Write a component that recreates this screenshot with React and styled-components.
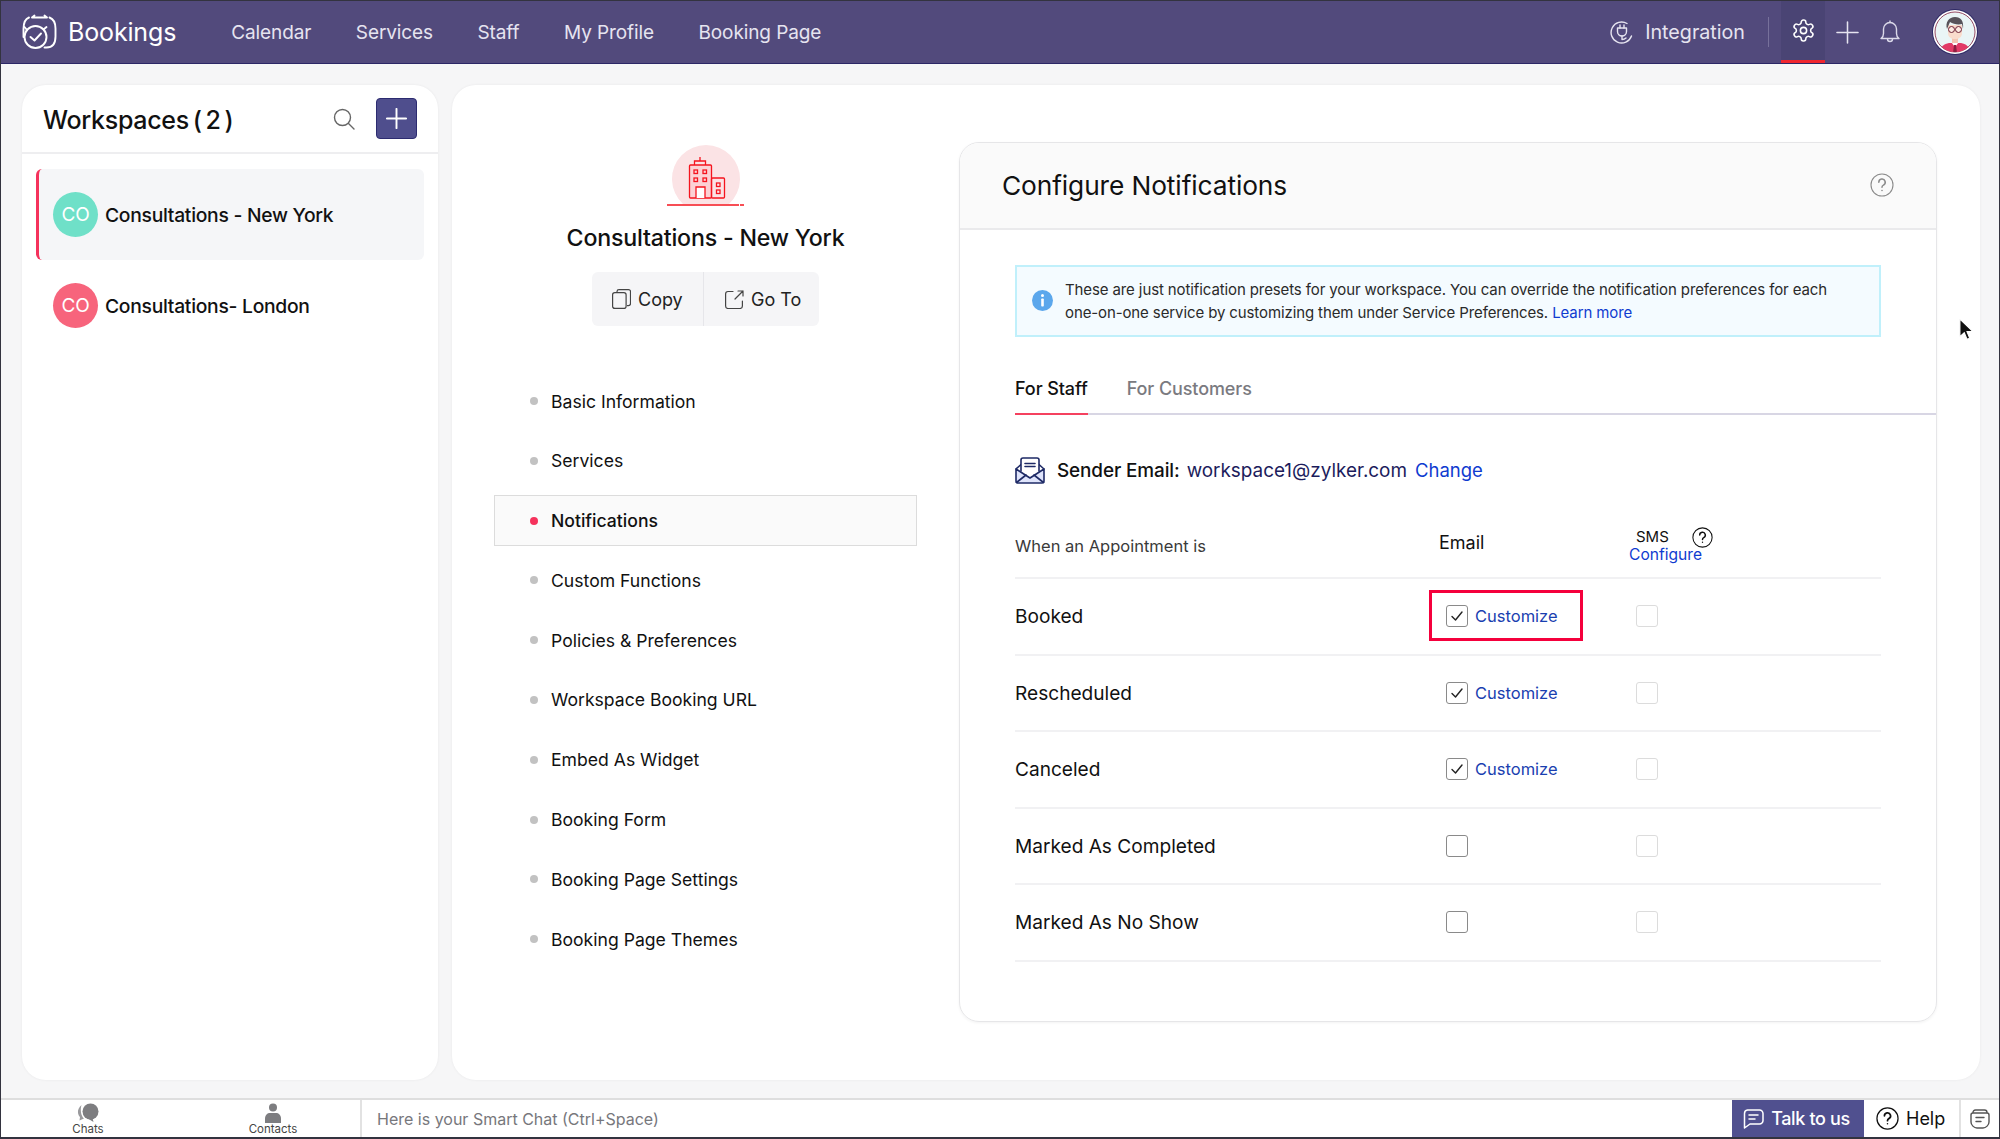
import React from 'react';
import styled, { createGlobalStyle } from 'styled-components';

const GlobalStyle = createGlobalStyle`
  html, body {
    margin: 0;
    padding: 0;
    width: 2000px;
    height: 1139px;
    overflow: hidden;
    background: #f6f6f7;
  }
  body {
    font-family: Inter, "Noto Sans", sans-serif;
    color: #111;
  }
  * { box-sizing: border-box; }
`;

const Page = styled.div`
  position: relative;
  width: 2000px;
  height: 1139px;
  display: flex;
  flex-direction: column;
  border: 1px solid #33333f;
  border-bottom-width: 2px;
  background: #f6f6f7;
`;

const Header = styled.header`
  height: 63px;
  flex: none;
  display: flex;
  align-items: center;
  padding: 0 21px;
  background: #524a7c;
  border-bottom: 1px solid #2c2766;
  color: #e6e4f0;
`;

const Brand = styled.div`
  display: flex;
  align-items: center;
  gap: 11px;
  margin-right: 55px;
  font-size: 25px;
  font-weight: 400;
  letter-spacing: -0.15px;
  color: #fff;
`;

const Nav = styled.nav`
  display: flex;
  gap: 44.5px;
  flex: 1;
`;

const NavLink = styled.span`
  font-size: 19px;
  letter-spacing: -0.1px;
  color: #e6e4f0;
`;

const Integration = styled.div`
  display: flex;
  align-items: center;
  gap: 11px;
  font-size: 19.7px;
  color: #e6e4f0;
`;

const HeaderDivider = styled.span`
  width: 1px;
  height: 30px;
  margin: 0 12px 0 23px;
  background: #77719b;
`;

const SettingsTab = styled.div`
  width: 44px;
  height: 62px;
  display: flex;
  align-items: center;
  justify-content: center;
  background: #4a4474;
  border-bottom: 3px solid #f0262f;
`;

const HeaderIcons = styled.div`
  display: flex;
  align-items: center;
  gap: 21px;
  margin: 0 32px 0 11px;
`;

const Main = styled.main`
  flex: 1;
  min-height: 0;
  display: flex;
  gap: 14px;
  padding: 21px 19px 18px 21px;
`;

const Card = styled.section`
  background: #fff;
  border-radius: 24px;
  box-shadow: 0 0 3px rgba(0, 0, 0, 0.06);
`;

const WorkspaceCard = styled(Card)`
  width: 416px;
  flex: none;
`;

const WorkspaceHead = styled.div`
  height: 69px;
  display: flex;
  align-items: center;
  gap: 21px;
  padding: 0 21px;
  border-bottom: 2px solid #eeeef0;
`;

const WorkspaceTitle = styled.h2`
  flex: 1;
  margin: 2px 0 0;
  font-size: 25px;
  font-weight: 500;
  letter-spacing: -0.3px;
  word-spacing: -2.5px;
  white-space: pre;
`;

const AddButton = styled.button`
  width: 41px;
  height: 41px;
  padding: 0;
  display: flex;
  align-items: center;
  justify-content: center;
  background: #4f4e8d;
  border: 1px solid #2c2b70;
  border-radius: 4px;
`;

const WorkspaceList = styled.div`
  padding: 15px 14px;
`;

const WorkspaceItem = styled.div`
  height: 91px;
  display: flex;
  align-items: center;
  gap: 7px;
  padding-left: 14px;
  border-left: 3px solid ${p => (p.$active ? '#f5325c' : 'transparent')};
  border-radius: 6px;
  background: ${p => (p.$active ? '#f5f6f8' : 'transparent')};
  font-size: 19.3px;
  font-weight: 500;
  letter-spacing: -0.28px;
`;

const Avatar = styled.span`
  width: 45px;
  height: 45px;
  border-radius: 50%;
  display: flex;
  align-items: center;
  justify-content: center;
  background: ${p => p.$color};
  color: #fff;
  font-size: 19px;
  font-weight: 400;
`;

const DetailCard = styled(Card)`
  flex: 1;
  display: flex;
  gap: 42px;
  padding: 57px 42px 0;
`;

const Sidebar = styled.div`
  width: 423px;
  flex: none;
  display: flex;
  flex-direction: column;
`;

const Summary = styled.div`
  display: flex;
  flex-direction: column;
  align-items: center;
  padding-top: 2px;
`;

const WorkspaceName = styled.h3`
  margin: 17px 0 19px;
  font-size: 23.2px;
  line-height: 30px;
  font-weight: 500;
  letter-spacing: -0.2px;
`;

const ButtonGroup = styled.div`
  display: flex;
  height: 54px;
  border-radius: 6px;
  background: #f5f5f7;
`;

const GroupButton = styled.div`
  display: flex;
  align-items: center;
  gap: 7px;
  width: ${p => p.$width}px;
  padding-left: ${p => p.$pad}px;
  font-size: 18px;
  color: #222;
  & + & {
    border-left: 1px solid #e6e6ea;
  }
`;

const Menu = styled.ul`
  list-style: none;
  margin: 49.5px 0 0;
  padding: 0;
  display: flex;
  flex-direction: column;
  gap: 8.8px;
`;

const MenuItem = styled.li`
  height: 51px;
  display: flex;
  align-items: center;
  gap: 13px;
  padding-left: 35px;
  font-size: 17.6px;
  font-weight: ${p => (p.$active ? 500 : 400)};
  border: 1px solid ${p => (p.$active ? '#dcdcdc' : 'transparent')};
  background: ${p => (p.$active ? '#fafafa' : 'transparent')};
`;

const Bullet = styled.span`
  width: 8px;
  height: 8px;
  border-radius: 50%;
  background: ${p => (p.$active ? '#f5325c' : '#c2c2c2')};
`;

const Panel = styled.div`
  width: 978px;
  height: 880px;
  flex: none;
  border: 1px solid #e6e6e8;
  border-radius: 20px;
  box-shadow: 0 1px 3px rgba(0, 0, 0, 0.05);
  overflow: hidden;
`;

const PanelHead = styled.div`
  height: 87px;
  display: flex;
  align-items: center;
  justify-content: space-between;
  padding: 0 42px 1px;
  background: #fafafa;
  border-bottom: 2px solid #eaeaec;
`;

const PanelTitle = styled.h2`
  margin: 0;
  font-size: 26.3px;
  font-weight: 400;
  letter-spacing: -0.1px;
`;

const PanelBody = styled.div`
  padding: 35px 55px 0;
`;

const Notice = styled.div`
  height: 72px;
  display: flex;
  align-items: center;
  gap: 12px;
  padding: 0 0 1px 15px;
  background: #f4fbff;
  border: 2px solid #c0f0fb;
  font-size: 15px;
  line-height: 23px;
  letter-spacing: -0.11px;
  color: #2a2a2a;
`;

const NoticeText = styled.p`
  margin: 0;
`;

const Link = styled.a`
  color: ${p => p.$color || '#0f3bd0'};
  font-size: ${p => (p.$size ? `${p.$size}px` : 'inherit')};
`;

const TabBar = styled.div`
  display: flex;
  gap: 39px;
  height: 48px;
  margin: 30px -55px 0 0;
  border-bottom: 2px solid #d8d6e4;
`;

const Tab = styled.div`
  height: 48px;
  padding-bottom: 4px;
  display: flex;
  align-items: center;
  font-size: 18px;
  font-weight: 500;
  letter-spacing: -0.1px;
  color: ${p => (p.$active ? '#111' : '#7a7a80')};
  border-bottom: 2px solid ${p => (p.$active ? '#f5415f' : 'transparent')};
`;

const SenderRow = styled.div`
  height: 40px;
  margin-top: 35px;
  display: flex;
  align-items: center;
  font-size: 18.9px;
`;

const SenderLabel = styled.span`
  margin: 0 7px 0 12px;
  font-weight: 500;
  letter-spacing: -0.1px;
`;

const SenderValue = styled.span`
  margin-right: 8px;
  color: #1c1c5c;
`;

const Table = styled.div`
  margin-top: 10px;
`;

const Row = styled.div`
  display: grid;
  grid-template-columns: 424px 190px 1fr;
  align-items: center;
  height: ${p => (p.$head ? 79 : 76.5)}px;
  border-bottom: 2px solid #f1f1f3;
`;

const HeadLabel = styled.span`
  padding-top: 14px;
  font-size: 16.5px;
  color: #3a3a3a;
`;

const HeadEmail = styled.span`
  font-size: 18px;
  padding-top: 8px;
`;

const SmsCell = styled.div`
  display: flex;
  flex-direction: column;
  padding-top: 15px;
  line-height: 18px;
`;

const SmsLine = styled.div`
  display: flex;
  align-items: center;
  gap: 23px;
  height: 18px;
  padding-left: 7px;
  font-size: 15px;
`;

const RowLabel = styled.span`
  font-size: 19.1px;
`;

const EmailCell = styled.div`
  position: relative;
  display: flex;
  align-items: center;
  gap: 7px;
  padding-left: 7px;
`;

const Highlight = styled.span`
  position: absolute;
  left: -10px;
  top: -15px;
  width: 154px;
  height: 51px;
  border: 3px solid #f5003c;
`;

const Check = styled.span`
  width: 22px;
  height: 22px;
  display: flex;
  align-items: center;
  justify-content: center;
  border: 1.5px solid ${p => (p.$muted ? '#dcdcdc' : '#8a8a8a')};
  border-radius: 3px;
  background: #fff;
  margin-left: ${p => (p.$muted ? 7 : 0)}px;
`;

const Footer = styled.footer`
  height: 39px;
  flex: none;
  display: flex;
  align-items: stretch;
  background: #fff;
  border-top: 2px solid #dedede;
`;

const FooterTabs = styled.div`
  width: 361px;
  flex: none;
  display: flex;
  gap: 85px;
  padding-left: 37px;
  border-right: 2px solid #e2e2e2;
`;

const FooterTab = styled.div`
  width: 100px;
  padding-top: 3px;
  display: flex;
  flex-direction: column;
  align-items: center;
  font-size: 11.5px;
  line-height: 12px;
  color: #444;
`;

const ChatInput = styled.div`
  flex: 1;
  display: flex;
  align-items: center;
  padding-left: 15px;
  font-size: 16px;
  color: #77777c;
`;

const TalkButton = styled.div`
  width: 132px;
  flex: none;
  display: flex;
  align-items: center;
  justify-content: center;
  gap: 7px;
  padding-right: 3px;
  background: #50508f;
  color: #fff;
  font-size: 18px;
  font-weight: 500;
  letter-spacing: -0.35px;
`;

const HelpButton = styled.div`
  width: 97px;
  flex: none;
  display: flex;
  align-items: center;
  gap: 7px;
  padding-left: 12px;
  font-size: 18px;
  border-right: 2px solid #e2e2e2;
`;

const NotesButton = styled.div`
  width: 38px;
  flex: none;
  display: flex;
  align-items: center;
  justify-content: center;
`;

const Cursor = styled.svg`
  position: absolute;
  left: 1957px;
  top: 317px;
`;

const LogoIcon = () => (
  <svg width="35" height="36" viewBox="0 0 35 36" fill="none" stroke="#fff" strokeWidth="1.9" strokeLinecap="round" strokeLinejoin="round">
    <path d="M7 3.500C3 5 1.500 9 1.500 15v8" />
    <path d="M10 3.500h15M10 3.500l2.500-2M25 3.500l-2.500-2" />
    <path d="M27.500 3.500c4 1.500 6 5 6 11v8c0 7-3 11-9 11h-2" />
    <circle cx="13.500" cy="23" r="11" />
    <path d="M8.500 23l4 3.500 6.500-7" />
    <path d="M5 16l-2.500-3M21.500 15.500l3-2.500" />
  </svg>
);

const PlugIcon = () => (
  <svg width="24" height="24" viewBox="0 0 24 24" fill="none" stroke="#e6e4f0" strokeWidth="1.4" strokeLinecap="round" strokeLinejoin="round">
    <path d="M17 3.500A10.500 10.500 0 1 0 21.500 16" />
    <path d="M7.500 8h9v3.500a4.500 4.500 0 0 1-9 0z" />
    <path d="M10 5v3M14 5v3M12 16v3.500c2 0 3-.5 4-1.500" />
  </svg>
);

const GearIcon = () => (
  <svg width="25" height="25" viewBox="0 0 24 24" fill="none" stroke="#fff" strokeWidth="1.5" strokeLinecap="round" strokeLinejoin="round">
    <circle cx="12" cy="12" r="3" />
    <path d="M12.220 2h-.44a2 2 0 0 0-2 2v.18a2 2 0 0 1-1 1.730l-.43.25a2 2 0 0 1-2 0l-.15-.08a2 2 0 0 0-2.730.73l-.22.38a2 2 0 0 0 .73 2.730l.15.1a2 2 0 0 1 1 1.720v.510a2 2 0 0 1-1 1.740l-.15.09a2 2 0 0 0-.73 2.730l.22.38a2 2 0 0 0 2.730.73l.15-.08a2 2 0 0 1 2 0l.43.25a2 2 0 0 1 1 1.730V20a2 2 0 0 0 2 2h.44a2 2 0 0 0 2-2v-.18a2 2 0 0 1 1-1.730l.43-.25a2 2 0 0 1 2 0l.15.08a2 2 0 0 0 2.730-.73l.22-.39a2 2 0 0 0-.73-2.730l-.15-.08a2 2 0 0 1-1-1.740v-.5a2 2 0 0 1 1-1.740l.15-.09a2 2 0 0 0 .73-2.730l-.22-.38a2 2 0 0 0-2.730-.73l-.15.08a2 2 0 0 1-2 0l-.43-.25a2 2 0 0 1-1-1.730V4a2 2 0 0 0-2-2z" />
  </svg>
);

const PlusIcon = ({ size = 23, color = '#e6e4f0', width = 1.6 }) => (
  <svg width={size} height={size} viewBox="0 0 24 24" fill="none" stroke={color} strokeWidth={width} strokeLinecap="round">
    <path d="M12 1v22M1 12h22" />
  </svg>
);

const BellIcon = () => (
  <svg width="20" height="24" viewBox="0 0 20 24" fill="none" stroke="#dcdaea" strokeWidth="1.4" strokeLinecap="round" strokeLinejoin="round">
    <path d="M1 18.500c1.500-1 2.500-2.500 2.500-5V9a6.500 6.500 0 0 1 13 0v4.500c0 2.500 1 4 2.500 5z" />
    <path d="M7.500 19a2.500 2.500 0 0 0 5 0" />
    <path d="M10 1v1.500" />
  </svg>
);

const UserIcon = () => (
  <svg width="46" height="46" viewBox="0 0 46 46">
    <defs>
      <clipPath id="avatar-clip">
        <circle cx="23" cy="23" r="20" />
      </clipPath>
    </defs>
    <circle cx="23" cy="23" r="23" fill="#2f2a66" />
    <circle cx="23" cy="23" r="22" fill="#fff" />
    <circle cx="23" cy="23" r="20" fill="#eaf5f6" stroke="#7c1f3d" strokeWidth="0.8" />
    <g clipPath="url(#avatar-clip)">
      <path d="M8 46c0-8 3-11 9-12h12c6 1 9 4 9 12z" fill="#e23a66" />
      <path d="M19 33l4 5 4-5z" fill="#fff" />
      <path d="M22 36h2l1 8h-4z" fill="#8c1f40" />
      <rect x="20" y="27" width="6" height="7" fill="#f3c6b3" />
      <path d="M16 16h14v8c0 4-3 6-7 6s-7-2-7-6z" fill="#f9dccd" />
      <path d="M15 20c-2-7 2-12 8-12s9 4 8 12l-1-5c-4 1-9 0-12-2z" fill="#57535a" />
      <circle cx="19.500" cy="20.500" r="3" fill="#fff" fillOpacity="0.4" stroke="#6b2136" strokeWidth="1" />
      <circle cx="26.500" cy="20.500" r="3" fill="#fff" fillOpacity="0.4" stroke="#6b2136" strokeWidth="1" />
    </g>
  </svg>
);

const SearchIcon = () => (
  <svg width="22" height="22" viewBox="0 0 22 22" fill="none" stroke="#666" strokeWidth="1.4" strokeLinecap="round">
    <circle cx="9.500" cy="9.500" r="8" />
    <path d="M15.500 15.500l5.500 5.500" />
  </svg>
);

const BuildingBadge = () => (
  <svg width="78" height="62" viewBox="0 0 78 62" fill="none" stroke="#f5141e" strokeWidth="1.3">
    <path d="M16 60A34 34 0 1 1 62 60z" fill="#fbe3e5" stroke="none" />
    <g transform="translate(22 13)">
      <path d="M11 0v4M5.500 8V4h11v4" />
      <rect x="0.500" y="8" width="22" height="33" rx="1" fill="#fcd2d5" />
      <rect x="22.500" y="21" width="13" height="20" rx="1" />
      <rect x="5" y="13" width="3.500" height="3.500" />
      <rect x="14" y="13" width="3.500" height="3.500" />
      <rect x="5" y="21" width="3.500" height="3.500" />
      <rect x="14" y="21" width="3.500" height="3.500" />
      <rect x="27.500" y="26" width="3.500" height="3.500" />
      <rect x="27.500" y="33" width="3.500" height="3.500" />
      <path d="M7 41V30h9v11" fill="#fff" />
    </g>
    <path d="M0 61h72M73 61h4" strokeWidth="1.4" />
  </svg>
);

const CopyIcon = () => (
  <svg width="19" height="20" viewBox="0 0 19 20" fill="none" stroke="#444" strokeWidth="1.2" strokeLinejoin="round">
    <path d="M5 3.500V2.500A2 2 0 0 1 7 .6h9.500a2 2 0 0 1 2 2v12a2 2 0 0 1-2 2H15" />
    <rect x="0.600" y="3.600" width="13.500" height="15.800" rx="2.200" />
  </svg>
);

const ExternalIcon = () => (
  <svg width="19" height="19" viewBox="0 0 19 19" fill="none" stroke="#444" strokeWidth="1.2" strokeLinecap="round" strokeLinejoin="round">
    <path d="M8 1.500H3a2.500 2.500 0 0 0-2.400 2.500v12a2.500 2.500 0 0 0 2.400 2.500h12a2.500 2.500 0 0 0 2.400-2.500V11" />
    <path d="M10 9l8-8M13 1h5v5" />
  </svg>
);

const HelpIcon = ({ size = 24, color = '#8b8b8b', width = 1.1 }) => (
  <svg width={size} height={size} viewBox="0 0 24 24" fill="none" stroke={color} strokeWidth={width} strokeLinecap="round">
    <circle cx="12" cy="12" r="11" />
    <path d="M8.800 9.200a3.200 3.200 0 1 1 4.600 2.900c-1 .5-1.400 1.100-1.400 2.200" strokeWidth={width * 1.4} />
    <circle cx="12" cy="17.500" r="0.800" fill={color} stroke="none" />
  </svg>
);

const InfoIcon = () => (
  <svg width="21" height="21" viewBox="0 0 21 21">
    <circle cx="10.500" cy="10.500" r="10.500" fill="#5ba7ec" />
    <circle cx="10.500" cy="5.500" r="1.500" fill="#fff" />
    <rect x="9.200" y="8.500" width="2.600" height="8" rx="0.800" fill="#fff" />
  </svg>
);

const MailIcon = () => (
  <svg width="30" height="27" viewBox="0 0 30 27" fill="none" stroke="#1e2a66" strokeWidth="1.600" strokeLinejoin="round" strokeLinecap="round">
    <path d="M1 12l5-4.500M29 12l-5-4.500" />
    <path d="M6 14V3a2 2 0 0 1 2-2h14a2 2 0 0 1 2 2v11" fill="#fff" />
    <path d="M10 6.500h10M10 9.500h10" />
    <path d="M1 12l14 9 14-9v12a2 2 0 0 1-2 2H3a2 2 0 0 1-2-2z" fill="#dfe4fb" />
    <path d="M1.500 25.500l9.500-7.500M28.500 25.500L19 18" />
  </svg>
);

const CheckMark = () => (
  <svg width="14" height="14" viewBox="0 0 14 14" fill="none" stroke="#222" strokeWidth="1.400" strokeLinecap="round" strokeLinejoin="round">
    <path d="M2 7.500L5.500 11 12 3" />
  </svg>
);

const ChatsIcon = () => (
  <svg width="22" height="20" viewBox="0 0 22 20">
    <path d="M4.500 2C2 4 0.500 7 1 10c.2 1.500 1 3 2 4l-.5 3.500L7 15.500C4 13 3 7 4.500 2z" fill="#9a9a9d" />
    <ellipse cx="13.500" cy="8.500" rx="8" ry="8" fill="#7d7d80" />
    <path d="M10 15l6.500 4-1-4z" fill="#7d7d80" />
  </svg>
);

const ContactsIcon = () => (
  <svg width="18" height="20" viewBox="0 0 18 20">
    <circle cx="9" cy="4.500" r="4" fill="#7d7d80" />
    <path d="M1 20v-4.500C1 12 3.500 10 6 10h6c2.500 0 5 2 5 5.500V20z" fill="#7d7d80" />
  </svg>
);

const BubbleIcon = () => (
  <svg width="21" height="20" viewBox="0 0 21 20" fill="none" stroke="#fff" strokeWidth="1.5" strokeLinecap="round" strokeLinejoin="round">
    <path d="M4.500 1h12A3.500 3.500 0 0 1 20 4.500v7a3.500 3.500 0 0 1-3.500 3.500H7l-5.500 4V4.500A3.500 3.500 0 0 1 4.500 1z" />
    <path d="M6 6h9M6 10h6" />
  </svg>
);

const NotesIcon = () => (
  <svg width="20" height="20" viewBox="0 0 20 20" fill="none" stroke="#555" strokeWidth="1.4" strokeLinejoin="round" strokeLinecap="round">
    <path d="M3 3.500C3 2 4 1 5.500 1h9c1.500 0 2.500 1 2.500 2.500" />
    <path d="M1 6a2 2 0 0 1 2-2h14a2 2 0 0 1 2 2v7c0 3-3 6-6 6H7c-3 0-6-3-6-6z" />
    <path d="M6 8.500h8M6 12.500h5" />
  </svg>
);

const menuItems = [
  'Basic Information',
  'Services',
  'Notifications',
  'Custom Functions',
  'Policies & Preferences',
  'Workspace Booking URL',
  'Embed As Widget',
  'Booking Form',
  'Booking Page Settings',
  'Booking Page Themes',
];

const appointmentRows = [
  { label: 'Booked', checked: true, highlighted: true },
  { label: 'Rescheduled', checked: true },
  { label: 'Canceled', checked: true },
  { label: 'Marked As Completed', checked: false },
  { label: 'Marked As No Show', checked: false },
];

const navLinks = ['Calendar', 'Services', 'Staff', 'My Profile', 'Booking Page'];

export default function App() {
  return (
    <>
      <GlobalStyle />
      <Page>
        <Header>
          <Brand>
            <LogoIcon />
            Bookings
          </Brand>
          <Nav>
            {navLinks.map(link => (
              <NavLink key={link}>{link}</NavLink>
            ))}
          </Nav>
          <Integration>
            <PlugIcon />
            Integration
          </Integration>
          <HeaderDivider />
          <SettingsTab>
            <GearIcon />
          </SettingsTab>
          <HeaderIcons>
            <PlusIcon />
            <BellIcon />
          </HeaderIcons>
          <UserIcon />
        </Header>

        <Main>
          <WorkspaceCard>
            <WorkspaceHead>
              <WorkspaceTitle>Workspaces ( 2 )</WorkspaceTitle>
              <SearchIcon />
              <AddButton>
                <PlusIcon size={21} color="#fff" width={2.2} />
              </AddButton>
            </WorkspaceHead>
            <WorkspaceList>
              <WorkspaceItem $active>
                <Avatar $color="#6fe0c8">CO</Avatar>
                Consultations - New York
              </WorkspaceItem>
              <WorkspaceItem>
                <Avatar $color="#f7647c">CO</Avatar>
                Consultations- London
              </WorkspaceItem>
            </WorkspaceList>
          </WorkspaceCard>

          <DetailCard>
            <Sidebar>
              <Summary>
                <BuildingBadge />
                <WorkspaceName>Consultations - New York</WorkspaceName>
                <ButtonGroup>
                  <GroupButton $width={111} $pad={20}>
                    <CopyIcon />
                    Copy
                  </GroupButton>
                  <GroupButton $width={116} $pad={21}>
                    <ExternalIcon />
                    Go To
                  </GroupButton>
                </ButtonGroup>
              </Summary>
              <Menu>
                {menuItems.map(item => (
                  <MenuItem key={item} $active={item === 'Notifications'}>
                    <Bullet $active={item === 'Notifications'} />
                    {item}
                  </MenuItem>
                ))}
              </Menu>
            </Sidebar>

            <Panel>
              <PanelHead>
                <PanelTitle>Configure Notifications</PanelTitle>
                <HelpIcon />
              </PanelHead>
              <PanelBody>
                <Notice>
                  <InfoIcon />
                  <NoticeText>
                    These are just notification presets for your workspace. You can override the notification preferences for each
                    <br />
                    one-on-one service by customizing them under Service Preferences. <Link>Learn more</Link>
                  </NoticeText>
                </Notice>
                <TabBar>
                  <Tab $active>For Staff</Tab>
                  <Tab>For Customers</Tab>
                </TabBar>
                <SenderRow>
                  <MailIcon />
                  <SenderLabel>Sender Email:</SenderLabel>
                  <SenderValue>workspace1@zylker.com</SenderValue>
                  <Link $size={18.5}>Change</Link>
                </SenderRow>
                <Table>
                  <Row $head>
                    <HeadLabel>When an Appointment is</HeadLabel>
                    <HeadEmail>Email</HeadEmail>
                    <SmsCell>
                      <SmsLine>
                        SMS
                        <HelpIcon size={21} color="#111" width={1.2} />
                      </SmsLine>
                      <Link $size={15.6}>Configure</Link>
                    </SmsCell>
                  </Row>
                  {appointmentRows.map(row => (
                    <Row key={row.label}>
                      <RowLabel>{row.label}</RowLabel>
                      <EmailCell>
                        {row.highlighted && <Highlight />}
                        <Check>{row.checked && <CheckMark />}</Check>
                        {row.checked && (
                          <Link $color="#1a3fb0" $size={16.5}>
                            Customize
                          </Link>
                        )}
                      </EmailCell>
                      <div>
                        <Check $muted />
                      </div>
                    </Row>
                  ))}
                </Table>
              </PanelBody>
            </Panel>
          </DetailCard>
        </Main>

        <Footer>
          <FooterTabs>
            <FooterTab>
              <ChatsIcon />
              Chats
            </FooterTab>
            <FooterTab>
              <ContactsIcon />
              Contacts
            </FooterTab>
          </FooterTabs>
          <ChatInput>Here is your Smart Chat (Ctrl+Space)</ChatInput>
          <TalkButton>
            <BubbleIcon />
            Talk to us
          </TalkButton>
          <HelpButton>
            <HelpIcon size={23} color="#111" width={1.3} />
            Help
          </HelpButton>
          <NotesButton>
            <NotesIcon />
          </NotesButton>
        </Footer>

        <Cursor width="18" height="24" viewBox="0 0 16 22">
          <path d="M1.500 1v16l4-3.500 2.500 6 2.500-1-2.500-6h5.500z" fill="#111" stroke="#fff" strokeWidth="1" />
        </Cursor>
      </Page>
    </>
  );
}
